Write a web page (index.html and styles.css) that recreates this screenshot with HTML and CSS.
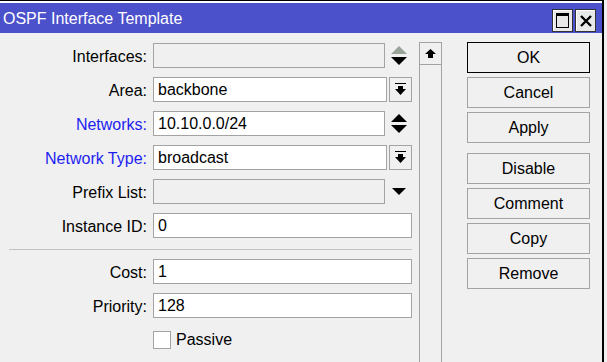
FILE: index.html
```html
<!DOCTYPE html>
<html lang="en">
<head>
  <meta charset="UTF-8">
  <meta name="viewport" content="width=device-width, initial-scale=1.0">
  <title>OSPF Interface Template</title>
  <link rel="stylesheet" href="styles.css">
</head>
<body>

  <div class="window">
    <div class="titlebar">
      <span class="title">OSPF Interface Template</span>
      <div class="title-buttons">
        <div class="tb-btn">
          <svg width="13" height="15" viewBox="0 0 13 15"><rect x="0.5" y="0.5" width="12" height="14" fill="none" stroke="#000"/><rect x="0" y="0" width="13" height="3" fill="#000"/></svg>
        </div>
        <div class="tb-btn">
          <svg width="12" height="12" viewBox="0 0 12 12"><path d="M1 1 L11 11 M11 1 L1 11" stroke="#000" stroke-width="2.4"/></svg>
        </div>
      </div>
    </div>

    <div class="content">
      <div class="form">
        <div class="row">
          <label>Interfaces:</label>
          <div class="field">
            <div class="input disabled"></div>
            <div class="addon">
              <svg width="16" height="20" viewBox="0 0 16 20"><polygon points="0,8 8,0 16,8" fill="#9aa39a"/><polygon points="0,11 16,11 8,19" fill="#000"/></svg>
            </div>
          </div>
        </div>

        <div class="row">
          <label>Area:</label>
          <div class="field">
            <div class="input">backbone</div>
            <div class="drop-btn">
              <svg width="11" height="13" viewBox="0 0 11 13"><rect x="0" y="0" width="11" height="1" fill="#000"/><rect x="3" y="3" width="5" height="4" fill="#000"/><polygon points="0,6 11,6 5.5,12" fill="#000"/></svg>
            </div>
          </div>
        </div>

        <div class="row">
          <label class="blue">Networks:</label>
          <div class="field">
            <div class="input">10.10.0.0/24</div>
            <div class="addon">
              <svg width="16" height="20" viewBox="0 0 16 20"><polygon points="0,8 8,0 16,8" fill="#000"/><polygon points="0,11 16,11 8,19" fill="#000"/></svg>
            </div>
          </div>
        </div>

        <div class="row">
          <label class="blue">Network Type:</label>
          <div class="field">
            <div class="input">broadcast</div>
            <div class="drop-btn">
              <svg width="11" height="13" viewBox="0 0 11 13"><rect x="0" y="0" width="11" height="1" fill="#000"/><rect x="3" y="3" width="5" height="4" fill="#000"/><polygon points="0,6 11,6 5.5,12" fill="#000"/></svg>
            </div>
          </div>
        </div>

        <div class="row">
          <label>Prefix List:</label>
          <div class="field">
            <div class="input disabled"></div>
            <div class="addon">
              <svg width="14" height="7" viewBox="0 0 14 7"><polygon points="0,0 14,0 7,7" fill="#000"/></svg>
            </div>
          </div>
        </div>

        <div class="row">
          <label>Instance ID:</label>
          <div class="field">
            <div class="input">0</div>
          </div>
        </div>

        <div class="separator"></div>

        <div class="row">
          <label>Cost:</label>
          <div class="field">
            <div class="input">1</div>
          </div>
        </div>

        <div class="row">
          <label>Priority:</label>
          <div class="field">
            <div class="input">128</div>
          </div>
        </div>

        <div class="check-row">
          <span class="checkbox"></span>
          <span>Passive</span>
        </div>
      </div>

      <div class="scrollbar">
        <div class="scroll-up">
          <svg width="11" height="9" viewBox="0 0 11 9"><polygon points="0,5 5.5,0 11,5" fill="#000"/><rect x="3" y="5" width="5" height="4" fill="#000"/></svg>
        </div>
        <div class="scroll-track"></div>
      </div>

      <div class="actions">
        <button class="default">OK</button>
        <button>Cancel</button>
        <button>Apply</button>
        <button class="group-start">Disable</button>
        <button>Comment</button>
        <button>Copy</button>
        <button>Remove</button>
      </div>
    </div>
  </div>

</body>
</html>
```

FILE: styles.css
```css
body {
  font-family: "Liberation Sans", Arial, sans-serif;
  font-size: 16px;
  background-color: #f0f0f0;
  margin: 0;
  overflow: hidden;
}

.window {
  width: 602px;
  height: 362px;
  background-color: #f0f0f0;
  border-top: 1px solid #000;
  border-right: 2px solid #000;
  display: flex;
  flex-direction: column;
}

/* barra de título */
.titlebar {
  height: 30px;
  border-top: 2px solid #fff;
  background-color: #4b50cb;
  display: flex;
  align-items: center;
  justify-content: space-between;
  padding-left: 3px;
}

.title {
  color: #fff;
  padding-top: 1px;
}

.title-buttons {
  display: flex;
  gap: 2px;
  margin-right: 6px;
  margin-top: 5px;
}

.tb-btn {
  width: 19px;
  height: 21px;
  background-color: #e8e8e8;
  border: 1px solid #333;
  box-shadow: inset 1px 1px 0 #fff;
  display: flex;
  align-items: center;
  justify-content: center;
}

/* conteúdo */
.content {
  flex: 1;
  display: flex;
  padding-top: 9px;
}

.form {
  width: 403px;
  padding-left: 9px;
  padding-top: 1px;
  display: flex;
  flex-direction: column;
  gap: 9px;
}

.row {
  display: flex;
  height: 25px;
}

.row label {
  width: 138px;
  margin-right: 6px;
  text-align: right;
  line-height: 25px;
  padding-top: 1px;
  color: #000;
}

.row label.blue {
  color: #1e1ef0;
}

.field {
  flex: 1;
  display: flex;
}

.input {
  flex: 1;
  background-color: #fff;
  border: 1px solid #a3a3a3;
  padding-left: 4px;
  line-height: 23px;
}

.input.disabled {
  background-color: #f0f0f0;
}

.addon {
  width: 27px;
  display: flex;
  align-items: center;
  justify-content: center;
}

.drop-btn {
  width: 23px;
  margin-left: 2px;
  border: 1px solid #a3a3a3;
  display: flex;
  align-items: flex-start;
  justify-content: center;
  padding-top: 5px;
  box-sizing: border-box;
}

.separator {
  height: 1px;
  background-color: #c4c4c4;
  margin: 2px 0 0;
}

.check-row {
  display: flex;
  align-items: center;
  gap: 5px;
  margin-left: 144px;
  margin-top: 4px;
}

.checkbox {
  width: 16px;
  height: 16px;
  background-color: #fff;
  border: 1px solid #a3a3a3;
}

/* barra de rolagem */
.scrollbar {
  width: 23px;
  margin-left: 7px;
  display: flex;
  flex-direction: column;
}

.scroll-up {
  width: 21px;
  height: 21px;
  border: 1px solid #a3a3a3;
  display: flex;
  align-items: center;
  justify-content: center;
}

.scroll-track {
  flex: 1;
  border-left: 1px solid #a3a3a3;
  border-right: 1px solid #a3a3a3;
}

/* botões */
.actions {
  width: 123px;
  margin-left: 25px;
  display: flex;
  flex-direction: column;
  gap: 4px;
}

.actions button {
  font-family: "Liberation Sans", Arial, sans-serif;
  font-size: 16px;
  height: 31px;
  background-color: #f0f0f0;
  border: 1px solid #a3a3a3;
  color: #000;
  padding: 0;
}

.actions button.default {
  border-color: #000;
}

.actions button.group-start {
  margin-top: 6px;
}
```
